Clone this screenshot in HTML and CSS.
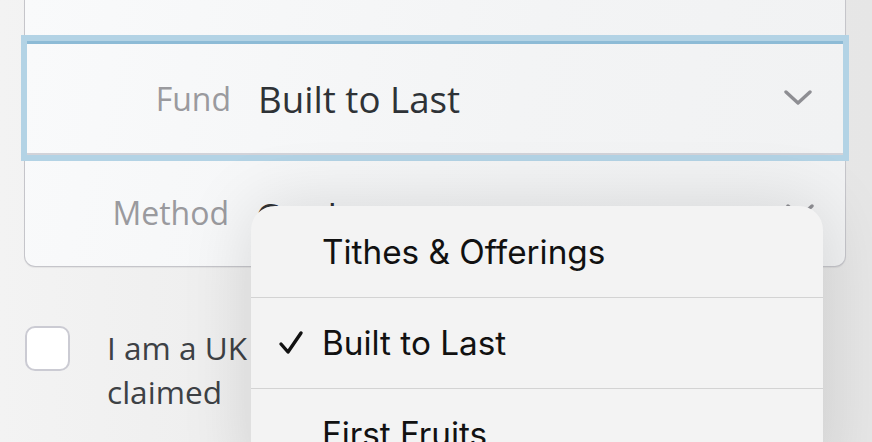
FILE: index.html
```html
<!DOCTYPE html>
<html>
<head>
<meta charset="utf-8">
<link rel="stylesheet" href="styles.css">
</head>
<body>
<div class="page">
  <div class="card">
    <div class="row top-row"></div>
    <div class="row field focused">
      <span class="label">Fund</span>
      <span class="value">Built to Last</span>
      <svg class="chev" width="28" height="16" viewBox="0 0 28 16"><polyline points="2,2 14,13 26,2" fill="none" stroke="#8e8e93" stroke-width="3.4" stroke-linecap="round" stroke-linejoin="round"/></svg>
    </div>
    <div class="row field method">
      <span class="label">Method</span>
      <span class="value">Card</span>
      <svg class="chev" width="28" height="16" viewBox="0 0 28 16"><polyline points="2,2 14,13 26,2" fill="none" stroke="#8e8e93" stroke-width="3.4" stroke-linecap="round" stroke-linejoin="round"/></svg>
    </div>
  </div>
  <div class="consent">
    <span class="box"></span>
    <p class="consent-text">I am a UK taxpayer and would like Gift Aid to be<br>claimed</p>
  </div>
</div>
<div class="menu">
  <div class="item"><span class="tick"></span><span>Tithes &amp; Offerings</span></div>
  <div class="item"><span class="tick"><svg width="26" height="26" viewBox="0 0 26 26"><polyline points="3,14 10,22 23,3" fill="none" stroke="#111" stroke-width="3.4" stroke-linecap="round" stroke-linejoin="round"/></svg></span><span>Built to Last</span></div>
  <div class="item"><span class="tick"></span><span>First Fruits</span></div>
</div>
</body>
</html>
```

FILE: styles.css
```css
html, body {
  margin: 0;
  padding: 0;
}
body {
  width: 872px;
  height: 442px;
  overflow: hidden;
  background: linear-gradient(90deg, #f3f3f3 0%, #ececec 40%, #e6e6e6 100%);
  font-family: "Open Sans", "Noto Sans", sans-serif;
  position: relative;
}
.page {
  padding: 0 26px 0 24px;
}
.card {
  background: linear-gradient(100deg, #f9fafb 0%, #f3f4f5 60%, #f1f2f3 100%);
  border: 1px solid #c5c5ca;
  border-top: none;
  border-radius: 0 0 11px 11px;
  box-shadow: 0 1px 1px rgba(0,0,0,0.06);
}
.row.top-row {
  height: 38px;
}
.field {
  display: grid;
  grid-template-columns: 204px 1fr auto;
  column-gap: 27px;
  align-items: center;
  padding-right: 31px;
}
.focused {
  height: 114px;
  margin: 0 -1px;
  border: 3px solid #b3d3e5;
  box-shadow: 0 0 0 3px #b3d3e5, inset 0 3px 0 #8dbbd6, inset 0 -2px 0 #d2d3d9;
  background: linear-gradient(100deg, #f9fafb 0%, #f3f4f5 60%, #f1f2f3 100%);
  position: relative;
  z-index: 1;
}
.method {
  height: 108px;
}
.label {
  font-size: 32px;
  color: #9a9a9e;
  text-align: right;
  line-height: 40px;
}
.value {
  font-size: 36.7px;
  color: #2e3236;
  line-height: 44px;
}
.chev {
  display: block;
}
.focused .label, .focused .value {
  position: relative;
  top: 1px;
}
.method .label {
  position: relative;
  top: 1px;
}
.method .value {
  position: relative;
  top: 4px;
}
.consent {
  display: flex;
  align-items: flex-start;
  gap: 37px;
  margin-top: 59px;
  padding-left: 1px;
}
.box {
  flex: none;
  width: 41px;
  height: 41px;
  border: 2px solid #cbcbd3;
  border-radius: 10px;
  background: #ffffff;
}
.consent-text {
  margin: 0;
  font-size: 31.6px;
  line-height: 44px;
  color: #3d4145;
  white-space: nowrap;
}
.menu {
  position: absolute;
  left: 251px;
  top: 206px;
  width: 572px;
  padding-top: 1px;
  background: #f3f3f3;
  border-radius: 24px 24px 0 0;
  box-shadow: 0 0 70px rgba(0,0,0,0.13);
  font-family: Inter, "Noto Sans", sans-serif;
  z-index: 5;
}
.item {
  height: 90px;
  display: flex;
  align-items: center;
  font-size: 33.3px;
  color: #111111;
  border-bottom: 1px solid #d3d3d3;
}
.tick {
  width: 71px;
  display: flex;
  justify-content: flex-end;
}
.tick svg {
  display: block;
  margin-right: 18px;
}
```
